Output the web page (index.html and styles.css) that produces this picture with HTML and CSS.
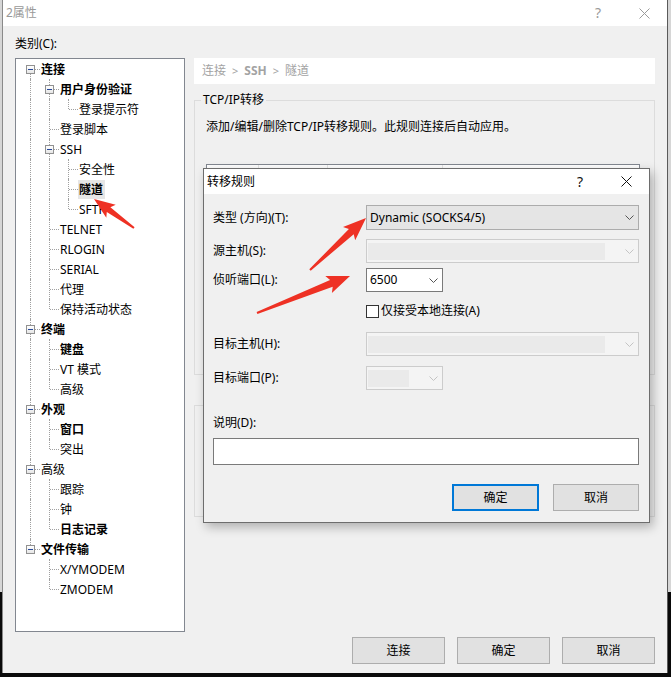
FILE: index.html
```html
<!DOCTYPE html>
<html lang="zh-CN">
<head>
<meta charset="utf-8">
<title>2属性</title>
<link rel="stylesheet" href="styles.css">
</head>
<body>
<div class="win">
  <div class="titlebar">
    <span class="ttl">2属性</span>
    <span class="tbtn q">?</span>
    <span class="tbtn"><svg width="11" height="11" viewBox="0 0 11 11"><path d="M0.5 0.5 L10.5 10.5 M10.5 0.5 L0.5 10.5" stroke="#9a9a9a" stroke-width="1" fill="none"/></svg></span>
  </div>
  <div class="content">
    <div class="cat-label">类别(C):</div>
    <div class="main">
      <div class="tree">
        <div class="row"><span class="c f"><i class="box"></i></span><span class="tx b">连接</span></div>
        <div class="row"><span class="c v"></span><span class="c t"><i class="box"></i></span><span class="tx b">用户身份验证</span></div>
        <div class="row"><span class="c v"></span><span class="c v"></span><span class="c l"></span><span class="tx">登录提示符</span></div>
        <div class="row"><span class="c v"></span><span class="c t"></span><span class="tx">登录脚本</span></div>
        <div class="row"><span class="c v"></span><span class="c t"><i class="box"></i></span><span class="tx">SSH</span></div>
        <div class="row"><span class="c v"></span><span class="c v"></span><span class="c t"></span><span class="tx">安全性</span></div>
        <div class="row"><span class="c v"></span><span class="c v"></span><span class="c t"></span><span class="tx b sel">隧道</span></div>
        <div class="row"><span class="c v"></span><span class="c v"></span><span class="c l"></span><span class="tx">SFTP</span></div>
        <div class="row"><span class="c v"></span><span class="c t"></span><span class="tx">TELNET</span></div>
        <div class="row"><span class="c v"></span><span class="c t"></span><span class="tx">RLOGIN</span></div>
        <div class="row"><span class="c v"></span><span class="c t"></span><span class="tx">SERIAL</span></div>
        <div class="row"><span class="c v"></span><span class="c t"></span><span class="tx">代理</span></div>
        <div class="row"><span class="c v"></span><span class="c l"></span><span class="tx">保持活动状态</span></div>
        <div class="row"><span class="c t"><i class="box"></i></span><span class="tx b">终端</span></div>
        <div class="row"><span class="c v"></span><span class="c t"></span><span class="tx b">键盘</span></div>
        <div class="row"><span class="c v"></span><span class="c t"></span><span class="tx">VT 模式</span></div>
        <div class="row"><span class="c v"></span><span class="c l"></span><span class="tx">高级</span></div>
        <div class="row"><span class="c t"><i class="box"></i></span><span class="tx b">外观</span></div>
        <div class="row"><span class="c v"></span><span class="c t"></span><span class="tx b">窗口</span></div>
        <div class="row"><span class="c v"></span><span class="c l"></span><span class="tx">突出</span></div>
        <div class="row"><span class="c t"><i class="box"></i></span><span class="tx">高级</span></div>
        <div class="row"><span class="c v"></span><span class="c t"></span><span class="tx">跟踪</span></div>
        <div class="row"><span class="c v"></span><span class="c t"></span><span class="tx">钟</span></div>
        <div class="row"><span class="c v"></span><span class="c l"></span><span class="tx b">日志记录</span></div>
        <div class="row"><span class="c l"><i class="box"></i></span><span class="tx b">文件传输</span></div>
        <div class="row"><span class="c"></span><span class="c t"></span><span class="tx">X/YMODEM</span></div>
        <div class="row"><span class="c"></span><span class="c l"></span><span class="tx">ZMODEM</span></div>
      </div>
      <div class="right">
        <div class="crumb"><span>连接</span><span class="sep">&gt;</span><span class="b">SSH</span><span class="sep">&gt;</span><span>隧道</span></div>
        <fieldset class="grp1">
          <legend>TCP/IP转移</legend>
          <div class="gdesc">添加/编辑/删除TCP/IP转移规则。此规则连接后自动应用。</div>
          <div class="tbl">
            <div class="thead"><span class="col c1"></span><span class="col c2"></span><span class="col c3"></span><span class="col c4"></span></div>
          </div>
        </fieldset>
        <div class="grp2"></div>
      </div>
    </div>
    <div class="footer">
      <button class="btn">连接</button>
      <button class="btn">确定</button>
      <button class="btn">取消</button>
    </div>
  </div>

  <div class="dlg">
    <div class="dtitle">
      <span class="ttl">转移规则</span>
      <span class="tbtn q dq">?</span>
      <span class="tbtn"><svg width="11" height="11" viewBox="0 0 11 11"><path d="M0.5 0.5 L10.5 10.5 M10.5 0.5 L0.5 10.5" stroke="#111" stroke-width="1" fill="none"/></svg></span>
    </div>
    <div class="dbody">
      <div class="frow r1">
        <span class="flabel">类型 (方向)(T):</span>
        <div class="combo drop"><span class="val">Dynamic (SOCKS4/5)</span><svg class="chev" width="9" height="5" viewBox="0 0 9 5"><path d="M0.5 0.5 L4.5 4.5 L8.5 0.5" fill="none" stroke="#555"/></svg></div>
      </div>
      <div class="frow r2">
        <span class="flabel">源主机(S):</span>
        <div class="combo dis"><span class="inner"></span><svg class="chev" width="9" height="5" viewBox="0 0 9 5"><path d="M0.5 0.5 L4.5 4.5 L8.5 0.5" fill="none" stroke="#c4c4c4"/></svg></div>
      </div>
      <div class="frow r3">
        <span class="flabel">侦听端口(L):</span>
        <div class="combo edit small"><span class="val">6500</span><svg class="chev" width="9" height="5" viewBox="0 0 9 5"><path d="M0.5 0.5 L4.5 4.5 L8.5 0.5" fill="none" stroke="#555"/></svg></div>
      </div>
      <div class="frow r4">
        <span class="flabel"></span>
        <span class="chk"></span><span>仅接受本地连接(A)</span>
      </div>
      <div class="frow r5">
        <span class="flabel">目标主机(H):</span>
        <div class="combo dis"><span class="inner"></span><svg class="chev" width="9" height="5" viewBox="0 0 9 5"><path d="M0.5 0.5 L4.5 4.5 L8.5 0.5" fill="none" stroke="#c4c4c4"/></svg></div>
      </div>
      <div class="frow r6">
        <span class="flabel">目标端口(P):</span>
        <div class="combo dis small"><span class="inner"></span><svg class="chev" width="9" height="5" viewBox="0 0 9 5"><path d="M0.5 0.5 L4.5 4.5 L8.5 0.5" fill="none" stroke="#c4c4c4"/></svg></div>
      </div>
      <div class="dlabel">说明(D):</div>
      <div class="desc"></div>
      <div class="dbtns">
        <button class="dbtn primary">确定</button>
        <button class="dbtn cancel">取消</button>
      </div>
    </div>
  </div>
</div>

<svg class="arrows" width="671" height="677" viewBox="0 0 671 677">
  <polygon points="134.6,227.2 110.4,207.2 115.7,204.8 94,199 106.3,217.8 106.8,212.0 133.4,228.8" fill="#ee3124"/>
  <polygon points="310.7,270.7 353.7,234.2 355.2,240.3 366,218 343.0,227.1 348.9,229.0 309.3,269.3" fill="#ee3124"/>
  <polygon points="257.4,313.9 332.7,286.7 331.9,292.9 350,276 325.3,276.1 330.1,280.1 256.6,312.1" fill="#ee3124"/>
</svg>
</body>
</html>
```

FILE: styles.css
```css
html, body {
  margin: 0;
  height: 677px;
  overflow: hidden;
}
body {
  background: linear-gradient(#d6d6d6 0, #d6d6d6 592px, #0a0a0a 592px);
  font-family: "Noto Sans", "Noto Sans CJK SC", sans-serif;
  font-size: 12px;
  line-height: 16px;
  color: #000;
}
.win {
  position: relative;
  margin-left: 2px;
  width: 664px;
  height: 673px;
  border-left: 1px solid #8a8a8a;
  border-right: 1px solid #5a5a5a;
  background: #f0f0f0;
  display: flex;
  flex-direction: column;
}
.titlebar {
  height: 26px;
  flex: none;
  background: #fff;
  display: flex;
  align-items: center;
  padding-left: 3px;
  color: #999;
}
.ttl { flex: 1; }
.tbtn {
  width: 46px;
  height: 100%;
  display: flex;
  align-items: center;
  justify-content: center;
}
.q { font-size: 14px; color: #9a9a9a; }
.content {
  flex: 1;
  display: flex;
  flex-direction: column;
  padding: 10px 12px 9px 12px;
}
.cat-label { height: 16px; }
.main {
  display: flex;
  gap: 9px;
  margin-top: 6px;
  height: 574px;
}
.tree {
  width: 170px;
  flex: none;
  box-sizing: border-box;
  border: 1px solid #828790;
  background: #fff;
  padding-left: 5px;
}
.row {
  display: flex;
  align-items: center;
  height: 20px;
}
.c {
  width: 19px;
  height: 20px;
  flex: none;
  position: relative;
}
.c.v::before, .c.t::before, .c.l::before, .c.f::before {
  content: "";
  position: absolute;
  left: 9px;
  top: 0;
  bottom: 0;
  border-left: 1px dotted #a0a0a0;
}
.c.l::before { bottom: 10px; }
.c.f::before { top: 10px; }
.c.t::after, .c.l::after, .c.f::after {
  content: "";
  position: absolute;
  left: 10px;
  width: 9px;
  top: 10px;
  border-top: 1px dotted #a0a0a0;
}
.box {
  position: absolute;
  left: 5px;
  top: 6px;
  width: 9px;
  height: 9px;
  box-sizing: border-box;
  border: 1px solid #919191;
  background: linear-gradient(#ffffff, #e6e6e6);
  z-index: 1;
}
.box::after {
  content: "";
  position: absolute;
  left: 1px;
  top: 3px;
  width: 5px;
  height: 1px;
  background: #27489a;
}
.tx {
  padding: 0 2px 0 1px;
  line-height: 19px;
  white-space: nowrap;
}
.b { font-weight: bold; }
.sel { background: #e6e6e6; }
.right {
  width: 461px;
  flex: none;
  display: flex;
  flex-direction: column;
}
.crumb {
  height: 26px;
  background: #fff;
  padding-left: 8px;
  color: #a3a3a3;
  display: flex;
  align-items: center;
  gap: 6px;
  font-size: 12px;
}
.crumb .sep { font-size: 11px; }
.grp1 {
  margin: 8px 0 0;
  padding: 0 14px 0 6px;
  border: 1px solid #dcdcdc;
  height: 283px;
  box-sizing: border-box;
  min-width: 0;
}
.grp1 legend {
  padding: 0 2px;
  line-height: 16px;
}
.gdesc { margin: 11px 0 0 5px; }
.tbl {
  margin: 29px 0 0 5px;
  height: 175px;
  border: 1px solid #828790;
  background: #fff;
}
.thead { display: flex; height: 23px; }
.col { border-right: 1px solid #e5e5e5; flex: none; }
.c1 { width: 51px; }
.c2 { width: 68px; }
.c3 { width: 114px; }
.c4 { border-right: 0; flex: 1; }
.grp2 {
  margin-top: 30px;
  height: 110px;
  border: 1px solid #dcdcdc;
}
.footer {
  display: flex;
  justify-content: flex-end;
  gap: 12px;
  margin-top: 5px;
}
.btn, .dbtn {
  font: inherit;
  color: #000;
  padding: 0;
  width: 93px;
  height: 27px;
  box-sizing: border-box;
  border: 1px solid #adadad;
  background: #e1e1e1;
}
/* dialog */
.dlg {
  position: absolute;
  left: 200px;
  top: 168px;
  width: 447px;
  height: 355px;
  box-sizing: border-box;
  border: 1px solid #6d6d6d;
  background: #f0f0f0;
  box-shadow: 3px 4px 10px rgba(0,0,0,0.28);
  display: flex;
  flex-direction: column;
}
.dtitle {
  height: 25px;
  flex: none;
  background: #fff;
  display: flex;
  align-items: center;
  padding-left: 3px;
}
.dq { color: #111; }
.dbody {
  padding: 0 10px 11px 9px;
  display: flex;
  flex-direction: column;
}
.frow { display: flex; align-items: center; }
.flabel { width: 153px; flex: none; }
.r1 { margin-top: 11px; height: 25px; }
.r2 { margin-top: 9px; height: 24px; }
.r3 { margin-top: 5px; height: 24px; }
.r4 { margin-top: 8px; height: 22px; }
.r5 { margin-top: 10px; height: 24px; }
.r6 { margin-top: 10px; height: 24px; }
.combo {
  flex: 1;
  height: 100%;
  box-sizing: border-box;
  display: flex;
  align-items: center;
  padding-left: 3px;
}
.combo.small { flex: none; width: 77px; }
.combo .chev { margin-left: auto; margin-right: 4px; flex: none; }
.drop { background: #e5e5e5; border: 1px solid #acacac; }
.edit { background: #fff; border: 1px solid #7a7a7a; }
.dis { background: #f4f4f4; border: 1px solid #cccccc; padding-left: 1px; }
.dis .inner {
  flex: 1;
  align-self: stretch;
  margin: 3px 20px 2px 0;
  background: #eaeaea;
}
.dis .chev { margin-left: 0; }
.chk {
  width: 13px;
  height: 13px;
  box-sizing: border-box;
  border: 1px solid #333;
  background: #fff;
  margin-right: 2px;
}
.dlabel { margin-top: 25px; height: 16px; }
.desc {
  margin-top: 7px;
  height: 27px;
  box-sizing: border-box;
  border: 1px solid #7a7a7a;
  background: #fff;
}
.dbtns {
  display: flex;
  justify-content: flex-end;
  gap: 14px;
  margin-top: 19px;
}
.dbtn.primary { width: 87px; border: 2px solid #0078d7; }
.dbtn.cancel { width: 86px; }
.arrows {
  position: absolute;
  left: 0;
  top: 0;
  pointer-events: none;
}
```
